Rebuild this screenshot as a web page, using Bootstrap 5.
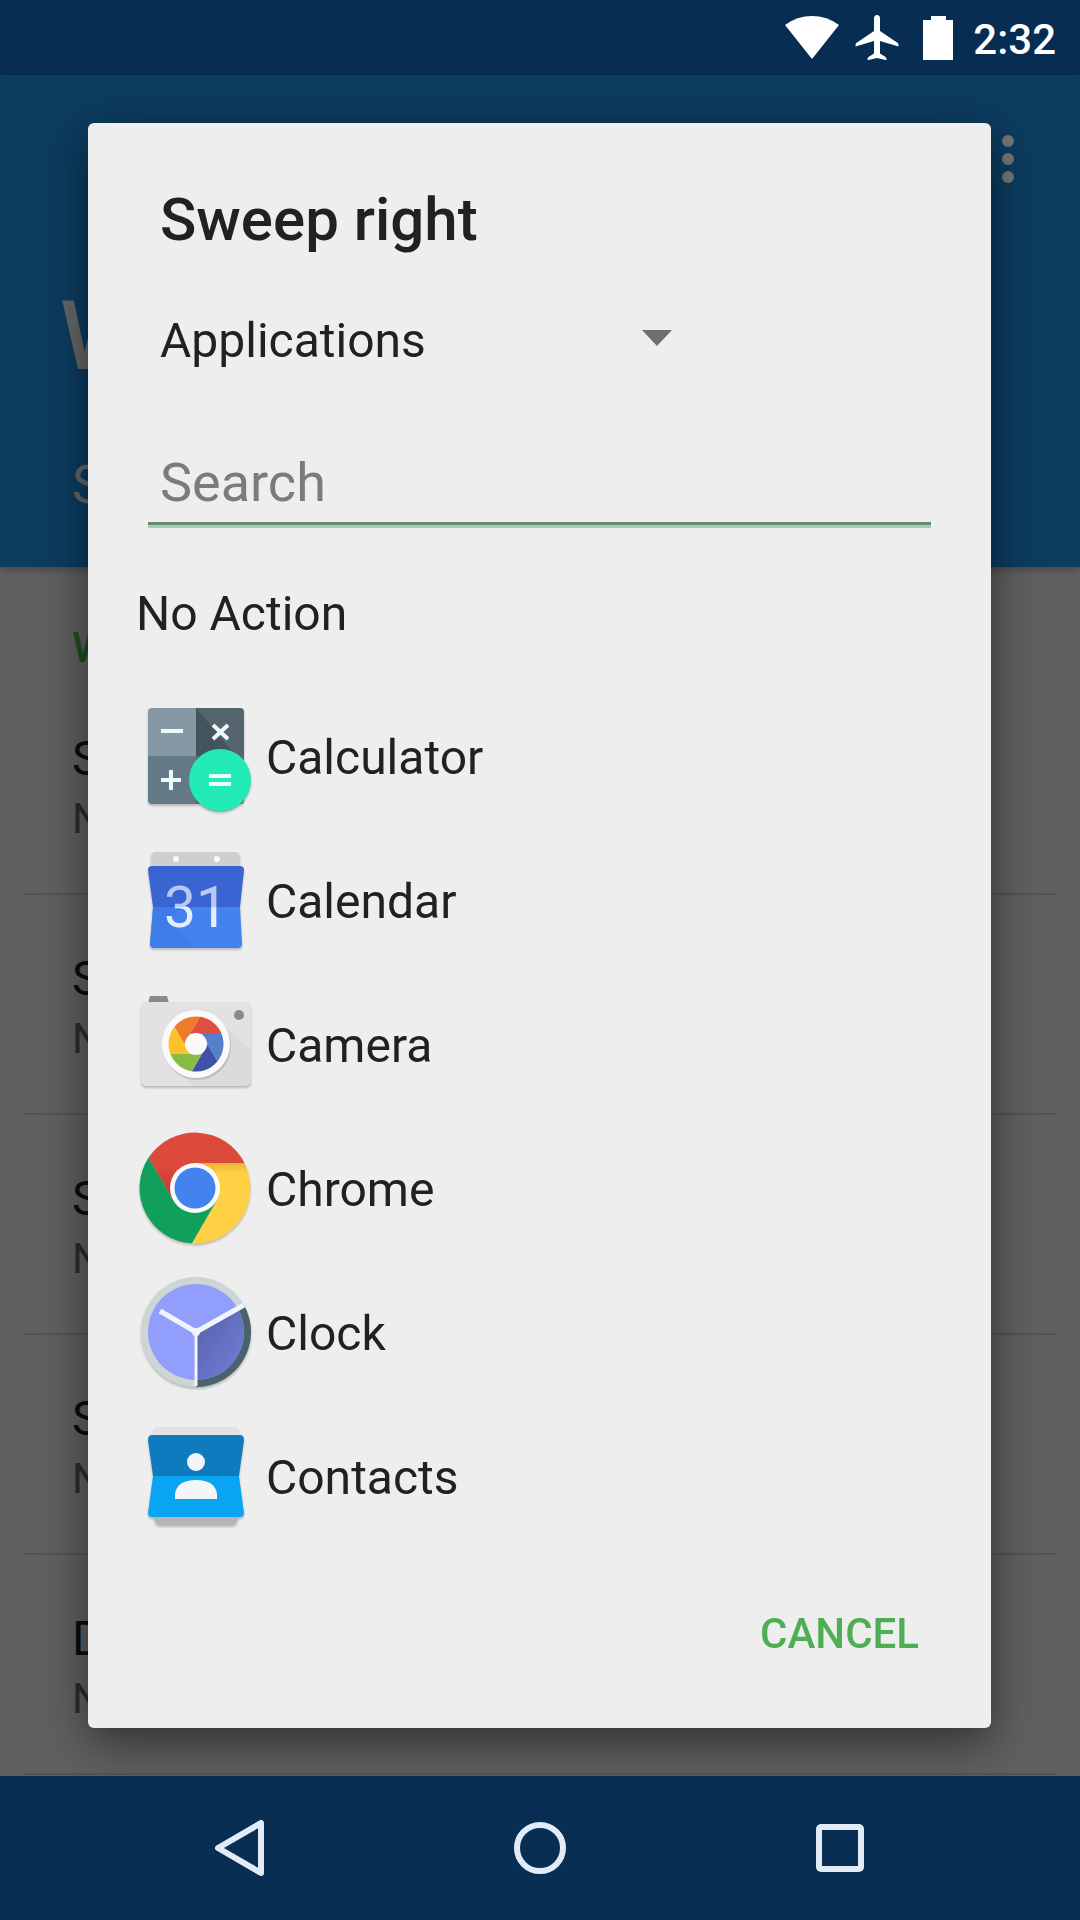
<!DOCTYPE html>
<html lang="en">
<head>
<meta charset="utf-8">
<meta name="viewport" content="width=device-width, initial-scale=1">
<title>Sweep right</title>
<link rel="stylesheet" href="https://cdn.jsdelivr.net/npm/bootstrap@5.3.0/dist/css/bootstrap.min.css">
<style>
  body { font-family: Roboto, "Noto Sans", sans-serif; font-size: 48px; line-height: 60px; color: #212121; background: #606060; }
  .status-bar { height: 75px; padding-right: 24px; background: #072d53; color: #fff; }
  .clock-text { font-size: 42px; line-height: 48px; font-weight: 500; margin-left: 20px; }
  .app-head { background: #0c3c60; color: #656667; padding: 60px 60px 50px; box-shadow: 0 2px 8px rgba(0,0,0,.3); }
  .more-btn { width: 24px; height: 48px; }
  .head-title { font-size: 96px; line-height: 112px; font-weight: 500; margin: 97px 0 61px; }
  .head-sub { font-size: 54px; line-height: 64px; padding-left: 12px; }
  .section-name { font-size: 42px; line-height: 54px; font-weight: 500; color: #1e4d22; padding: 54px 72px 0; margin: 0; }
  .pref-row { margin: 0 24px; padding: 54px 48px 44px; border-bottom: 2px solid #535353; color: #0c0c0c; }
  .pref-value { font-size: 42px; color: #2c2c2c; }
  .nav-keys { height: 144px; padding: 0 90px; background: #082e54; }
  .picker-modal { overflow: hidden; }
  .picker-dialog { max-width: none; margin: 123px 89px 0 88px; }
  .picker { background: #eee; color: #212121; border: 0; border-radius: 6px; padding: 61px 48px 58px; box-shadow: 0 14px 46px rgba(0,0,0,.5); }
  .picker-title { font-size: 60px; line-height: 72px; font-weight: 500; margin: 0 24px 49px; }
  .kind { width: 512px; margin: 0 24px 66px; }
  .kind select { appearance: none; border: 0; background: none; color: inherit; font-size: 48px; line-height: 72px; height: 72px; padding: 0; outline: 0; }
  .kind::after { content: ""; margin-left: -29px; margin-bottom: 6px; border: solid transparent; border-width: 16px 15px 0; border-top-color: #6f6f6f; pointer-events: none; }
  .search-box { width: auto; margin: 0 12px 17px; padding: 0 12px 1px; height: 82px; font-size: 54px; color: #212121; background: none; border: 0; border-bottom: 3px solid #658c6b; border-radius: 0; box-shadow: 0 3px 0 #a9cbb0; }
  .search-box::placeholder { color: #7b7b7b; opacity: 1; }
  .app-row { height: 144px; padding: 0; gap: 10px; border: 0; background: none; color: inherit; }
  .app-icon { width: 120px; height: 120px; flex: none; filter: drop-shadow(0 2px 1px rgba(0,0,0,.22)); }
  .cancel-btn { font-size: 42px; line-height: 54px; font-weight: 500; color: #4fae53; border: 0; padding: 9px 24px; margin-top: 48px; }
</style>
<script src="https://cdn.jsdelivr.net/npm/bootstrap@5.3.0/dist/js/bootstrap.bundle.min.js"></script>
</head>
<body>
<div class="d-flex flex-column min-vh-100">
  <div class="status-bar d-flex align-items-center justify-content-end">
    <svg width="54" height="46" viewBox="0 0 54 46" aria-label="Wi-Fi"><path fill="#fff" d="M0 10Q12 1 27 1T54 10L27 44Z"/></svg>
    <svg class="ms-3" width="44" height="48" viewBox="0 0 44 48" aria-label="Airplane mode"><path fill="#fff" d="M22 1c-2 0-3 1.500-3 3.500V17L2 28.500C.8 29.300.5 30 .5 32.500L19 27v12.500l-5.500 3.500c-.7.500-1 1.500-1 3.200L22 44l9.500 2.200c0-1.700-.3-2.700-1-3.200L25 39.500V27l18.500 5.500c0-2.500-.3-3.200-1.500-4L25 17V4.500C25 2.500 24 1 22 1Z"/></svg>
    <svg class="ms-4" width="30" height="46" viewBox="0 0 30 46" aria-label="Battery"><path fill="#fff" d="M8 1h15v4h7v40H0V5h8Z"/></svg>
    <span class="clock-text pt-1">2:32</span>
  </div>

  <header class="app-head">
    <div class="d-flex justify-content-end">
      <button class="more-btn btn p-0 border-0 d-flex" aria-label="More options"><svg width="24" height="48" viewBox="0 0 24 48" fill="#757777"><circle cx="12" cy="6" r="6"/><circle cx="12" cy="24" r="6"/><circle cx="12" cy="42" r="6"/></svg></button>
    </div>
    <h1 class="head-title">W</h1>
    <div class="head-sub">S</div>
  </header>

  <main class="flex-grow-1">
    <h2 class="section-name">W</h2>
    <div class="pref-row"><div>S</div><div class="pref-value">N</div></div>
    <div class="pref-row"><div>S</div><div class="pref-value">N</div></div>
    <div class="pref-row"><div>S</div><div class="pref-value">N</div></div>
    <div class="pref-row"><div>S</div><div class="pref-value">N</div></div>
    <div class="pref-row"><div>D</div><div class="pref-value">N</div></div>
  </main>

  <nav class="nav-keys d-flex align-items-stretch" aria-label="System">
    <button class="btn border-0 w-100 p-0" aria-label="Back"><svg width="60" height="60" viewBox="0 0 60 60" fill="none" stroke="#e2ecf8" stroke-width="6" stroke-linejoin="round"><path d="M8 30 51 5V55Z"/></svg></button>
    <button class="btn border-0 w-100 p-0" aria-label="Home"><svg width="60" height="60" viewBox="0 0 60 60" fill="none" stroke="#e2ecf8" stroke-width="6"><circle cx="30" cy="30" r="23"/></svg></button>
    <button class="btn border-0 w-100 p-0" aria-label="Recent apps"><svg width="60" height="60" viewBox="0 0 60 60" fill="none" stroke="#e2ecf8" stroke-width="6"><rect x="9" y="9" width="42" height="42" rx="2"/></svg></button>
  </nav>
</div>

<div class="modal picker-modal d-block" role="dialog" aria-labelledby="pickerTitle">
  <div class="modal-dialog picker-dialog">
    <div class="modal-content picker">
      <h2 class="picker-title" id="pickerTitle">Sweep right</h2>
      <div class="kind d-flex align-items-center">
        <select class="w-100" aria-label="Action type"><option>Applications</option></select>
      </div>
      <input class="form-control search-box" type="text" placeholder="Search" aria-label="Search">
      <div class="list-group">
        <button class="list-group-item app-row d-flex align-items-center">No Action</button>

        <button class="list-group-item app-row d-flex align-items-center">
          <svg class="app-icon" viewBox="0 0 120 120">
            <defs><clipPath id="calcBox"><rect x="12" y="10" width="96" height="96" rx="4"/></clipPath></defs>
            <g clip-path="url(#calcBox)">
              <path fill="#8499a4" d="M12 10h48v48H12z"/><path fill="#54656e" d="M60 10h48v96H60z"/><path fill="#43545d" d="M60 10l40 48H60z"/><path fill="#647b87" d="M12 58h48v48H12z"/>
            </g>
            <circle cx="84" cy="83" r="31" fill="#178c72" opacity=".3"/>
            <circle cx="84" cy="82" r="31" fill="#22ebb8"/>
            <path stroke="#eefafa" stroke-width="4" fill="none" d="M25 33h22M77 27l15 14M92 27L77 41M25 82h20M35 72v20M73 78h22M73 86h22"/>
          </svg>Calculator
        </button>

        <button class="list-group-item app-row d-flex align-items-center">
          <svg class="app-icon" viewBox="0 0 120 120">
            <defs><linearGradient id="dayFill" gradientUnits="userSpaceOnUse" x1="0" y1="40" x2="0" y2="90"><stop offset=".5" stop-color="#b9c8f4"/><stop offset=".5" stop-color="#e6eefe"/></linearGradient></defs>
            <path fill="#cfcfcf" d="M19 10h81q4 0 4 6v10H15V16q0-6 4-6Z"/>
            <circle cx="40" cy="17" r="3" fill="#fafafa"/><circle cx="81" cy="17" r="3" fill="#fafafa"/>
            <path fill="#3a64d2" d="M16 24h88q4 0 4 4l-4 37H17L12 28q0-4 4-4Z"/>
            <path fill="#4482ef" d="M17 65h87l2 37q0 4-4 4H18q-4 0-4-4Z"/>
            <path fill="#3c76e2" d="M17 65h29L33 80l26 26H18q-4 0-4-4Z" opacity=".5"/>
            <text x="60" y="85" text-anchor="middle" font-family="Roboto, sans-serif" font-size="57" font-weight="400" fill="url(#dayFill)">31</text>
          </svg>Calendar
        </button>

        <button class="list-group-item app-row d-flex align-items-center">
          <svg class="app-icon" viewBox="0 0 120 120">
            <path fill="#8a8a8a" d="M14 10h17l2 8H12Z"/>
            <rect x="5" y="16" width="110" height="84" rx="5" fill="#e2e2e2"/>
            <path fill="#cfcfcf" d="M87 38l28 27v30q0 5-5 5H57L39 84Z" opacity=".35"/>
            <circle cx="103" cy="29" r="5" fill="#8a8a8a"/>
            <circle cx="61" cy="60" r="34" fill="#bdbdbd"/>
            <circle cx="60" cy="58" r="34" fill="#fafafa"/>
            <g transform="translate(60 58)">
              <path fill="#5581ca" d="M-5.800-10H25.600A27.500 27.500 0 0 1 21.500 17.200L5.800-10Z"/>
              <path transform="rotate(60)" fill="#3f51a8" d="M-5.800-10H25.600A27.500 27.500 0 0 1 21.500 17.200L5.800-10Z"/>
              <path transform="rotate(120)" fill="#87bd45" d="M-5.800-10H25.600A27.500 27.500 0 0 1 21.500 17.200L5.800-10Z"/>
              <path transform="rotate(180)" fill="#fcc22b" d="M-5.800-10H25.600A27.500 27.500 0 0 1 21.500 17.200L5.800-10Z"/>
              <path transform="rotate(240)" fill="#ee7a2c" d="M-5.800-10H25.600A27.500 27.500 0 0 1 21.500 17.200L5.800-10Z"/>
              <path transform="rotate(300)" fill="#de4f3f" d="M-5.800-10H25.600A27.500 27.500 0 0 1 21.500 17.200L5.800-10Z"/>
              <circle r="11" fill="#fafafa"/>
            </g>
          </svg>Camera
        </button>

        <button class="list-group-item app-row d-flex align-items-center">
          <svg class="app-icon" viewBox="0 0 120 120">
            <defs>
              <linearGradient id="shadeY" x1="0" y1="0" x2="0" y2="1"><stop offset="0" stop-color="#eab236"/><stop offset=".12" stop-color="#fed043"/></linearGradient>
              <linearGradient id="shadeR" x1="0" y1="1" x2="0" y2="0"><stop offset="0" stop-color="#b93a30"/><stop offset=".5" stop-color="#dc4a3c"/></linearGradient>
            </defs>
            <g transform="translate(59 58)">
              <path fill="url(#shadeY)" d="M0-25H49.500A55.500 55.500 0 0 1-3.100 55.400L21.700 12.500Z"/>
              <path transform="rotate(120)" fill="#10a05b" d="M0-25H49.500A55.500 55.500 0 0 1-3.100 55.400L21.700 12.500Z"/>
              <path fill="url(#shadeR)" d="M-21.700 12.500L-46.400-30.400A55.500 55.500 0 0 1 49.500-25H0Z"/>
              <circle r="25" fill="#fafafa"/><circle r="20.500" fill="#4283f0"/>
            </g>
          </svg>Chrome
        </button>

        <button class="list-group-item app-row d-flex align-items-center">
          <svg class="app-icon" viewBox="0 0 120 120">
            <defs><linearGradient id="sector" x1="0" y1="0" x2="1" y2="1"><stop offset="0" stop-color="#5560a8"/><stop offset="1" stop-color="#7380d8"/></linearGradient></defs>
            <circle cx="60" cy="58" r="55" fill="#cdd5d5"/>
            <path fill="#4a626c" d="M60 58L108 31A55 55 0 0 1 60 113Z"/>
            <circle cx="60" cy="58" r="48" fill="#919efb"/>
            <path fill="url(#sector)" d="M60 58L102 35A48 48 0 0 1 60 106Z"/>
            <path stroke="#f1f4fd" stroke-width="5" fill="none" d="M24 37L60 58 108 31"/>
            <path stroke="#f1f4fd" stroke-width="3" d="M60 58V112"/><circle cx="60" cy="58" r="4" fill="#f1f4fd"/>
          </svg>Clock
        </button>

        <button class="list-group-item app-row d-flex align-items-center">
          <svg class="app-icon" viewBox="0 0 120 120">
            <path fill="#e2e2e2" d="M21 9h78q4 0 5 8H16q1-8 5-8Z"/>
            <path fill="#b5b5b5" d="M16 97h88l-4 8q-1 2-4 2H24q-3 0-4-2Z"/>
            <path fill="#0f7bbf" d="M16 17h88q4 0 4 5l-5 36H17L12 22q0-5 4-5Z"/>
            <path fill="#0aa5f2" d="M17 58h86l5 37q0 4-4 4H16q-4 0-4-4Z"/>
            <circle cx="60" cy="44" r="9" fill="#f2f6f8"/>
            <path fill="#f2f6f8" d="M39 81V76Q41 62 60 62T81 76V81Z"/>
          </svg>Contacts
        </button>
      </div>
      <div class="d-flex justify-content-end">
        <button class="btn cancel-btn">CANCEL</button>
      </div>
    </div>
  </div>
</div>
</body>
</html>
